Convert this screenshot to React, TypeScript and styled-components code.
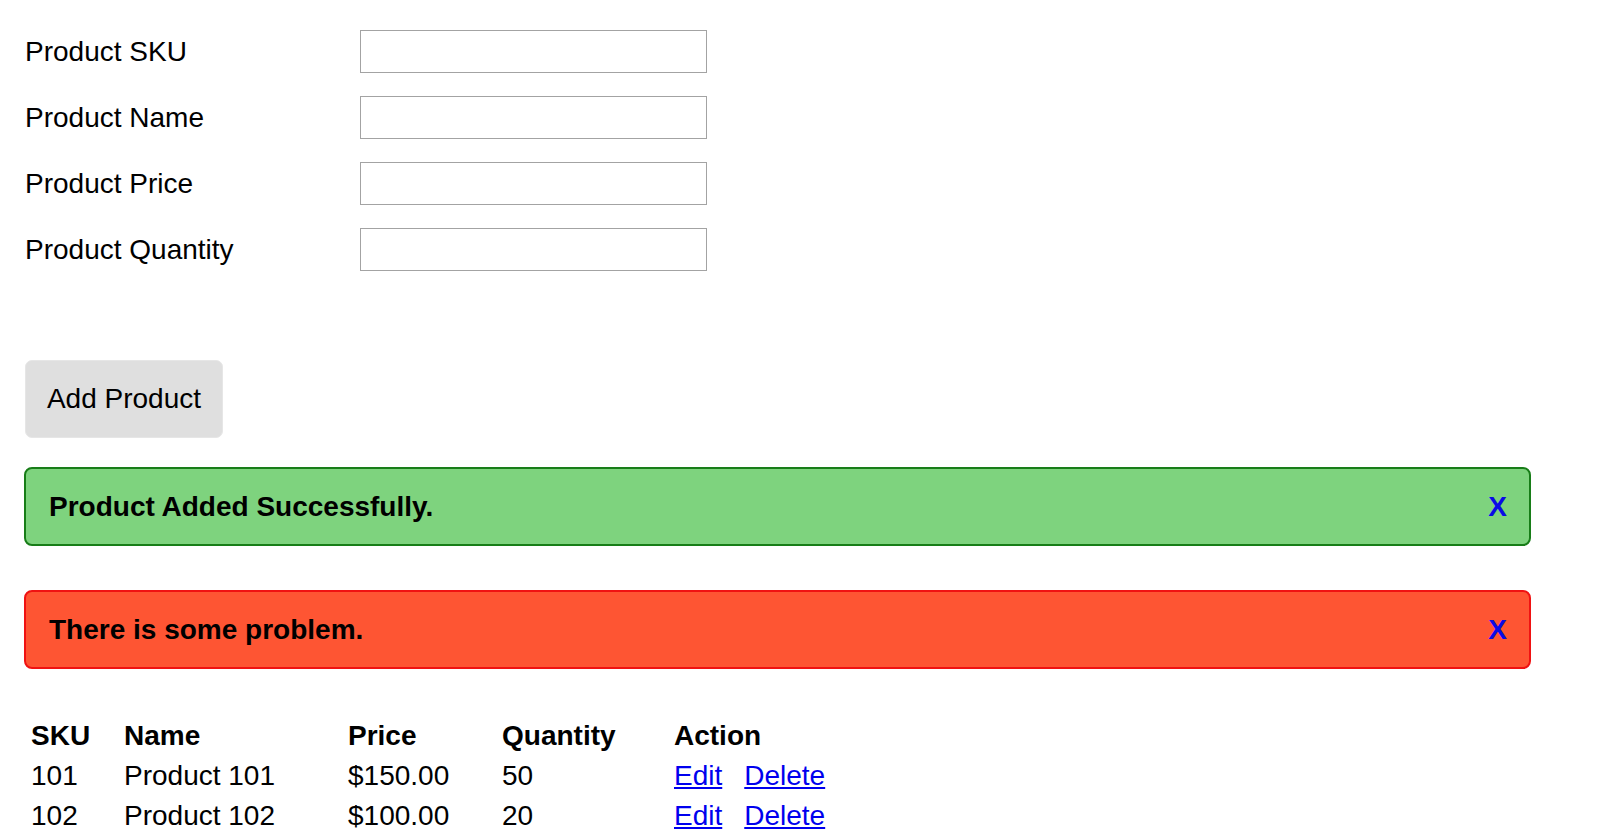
import React, { useState } from "react";
import styled, { createGlobalStyle } from "styled-components";

const GlobalStyle = createGlobalStyle`
  body {
    margin: 0;
    background: #ffffff;
    color: #000000;
    font-family: "Liberation Sans", Arial, sans-serif;
  }
`;

const Page = styled.div`
  display: flex;
  flex-direction: column;
  padding: 30px 0 0 24px;
  width: 1507px;
`;

const Form = styled.div`
  display: flex;
  flex-direction: column;
  gap: 23px;
  padding-left: 1px;
`;

const Row = styled.div`
  display: grid;
  grid-template-columns: 335px 347px;
  align-items: center;
`;

const Label = styled.label`
  font-size: 28px;
`;

const Input = styled.input`
  box-sizing: border-box;
  height: 43px;
  width: 347px;
  border: 1px solid #a3a3a3;
  background: #fff;
  font-size: 28px;
  padding: 0 6px;
  outline: none;
`;

const Button = styled.button`
  align-self: flex-start;
  margin: 89px 0 0 1px;
  box-sizing: border-box;
  width: 198px;
  height: 78px;
  padding: 0;
  background: #dfdfdf;
  border: 1px solid #e6e6e6;
  border-radius: 7px;
  font-family: "Liberation Sans", Arial, sans-serif;
  font-size: 28px;
  color: #000;
  white-space: nowrap;
  text-align: center;
`;

const Alert = styled.div<{ $kind: "success" | "error" }>`
  box-sizing: border-box;
  display: flex;
  align-items: center;
  justify-content: space-between;
  height: 79px;
  padding: 0 22px 0 23px;
  border-radius: 8px;
  border: 2px solid ${(p) => (p.$kind === "success" ? "#187d18" : "#f01212")};
  background: ${(p) => (p.$kind === "success" ? "#7ed37e" : "#fe5533")};
  font-size: 28px;
  font-weight: bold;
  margin-top: ${(p) => (p.$kind === "success" ? "29px" : "44px")};
`;

const Close = styled.span`
  color: #0a0ae6;
  font-weight: bold;
  cursor: pointer;
`;

const Table = styled.div`
  margin: 47px 0 0 7px;
  display: grid;
  grid-template-columns: 93px 224px 154px 172px 200px;
  grid-auto-rows: 40px;
  align-items: center;
  font-size: 28px;
`;

const Head = styled.div`
  font-weight: bold;
`;

const Cell = styled.div``;

const Actions = styled.div`
  display: flex;
  gap: 22px;
`;

const Link = styled.a`
  color: #0000ee;
  text-decoration: underline;
  cursor: pointer;
`;

interface Product {
  sku: number;
  name: string;
  price: string;
  quantity: number;
}

const products: Product[] = [
  { sku: 101, name: "Product 101", price: "$150.00", quantity: 50 },
  { sku: 102, name: "Product 102", price: "$100.00", quantity: 20 },
];

const fields = ["Product SKU", "Product Name", "Product Price", "Product Quantity"];

const App: React.FC = () => {
  const [showSuccess, setShowSuccess] = useState(true);
  const [showError, setShowError] = useState(true);

  return (
    <>
      <GlobalStyle />
      <Page>
        <Form>
          {fields.map((f) => (
            <Row key={f}>
              <Label>{f}</Label>
              <Input />
            </Row>
          ))}
        </Form>
        <Button>Add Product</Button>
        {showSuccess && (
          <Alert $kind="success">
            <span>Product Added Successfully.</span>
            <Close onClick={() => setShowSuccess(false)}>X</Close>
          </Alert>
        )}
        {showError && (
          <Alert $kind="error">
            <span>There is some problem.</span>
            <Close onClick={() => setShowError(false)}>X</Close>
          </Alert>
        )}
        <Table>
          <Head>SKU</Head>
          <Head>Name</Head>
          <Head>Price</Head>
          <Head>Quantity</Head>
          <Head>Action</Head>
          {products.map((p) => (
            <React.Fragment key={p.sku}>
              <Cell>{p.sku}</Cell>
              <Cell>{p.name}</Cell>
              <Cell>{p.price}</Cell>
              <Cell>{p.quantity}</Cell>
              <Actions>
                <Link>Edit</Link>
                <Link>Delete</Link>
              </Actions>
            </React.Fragment>
          ))}
        </Table>
      </Page>
    </>
  );
};

export default App;
